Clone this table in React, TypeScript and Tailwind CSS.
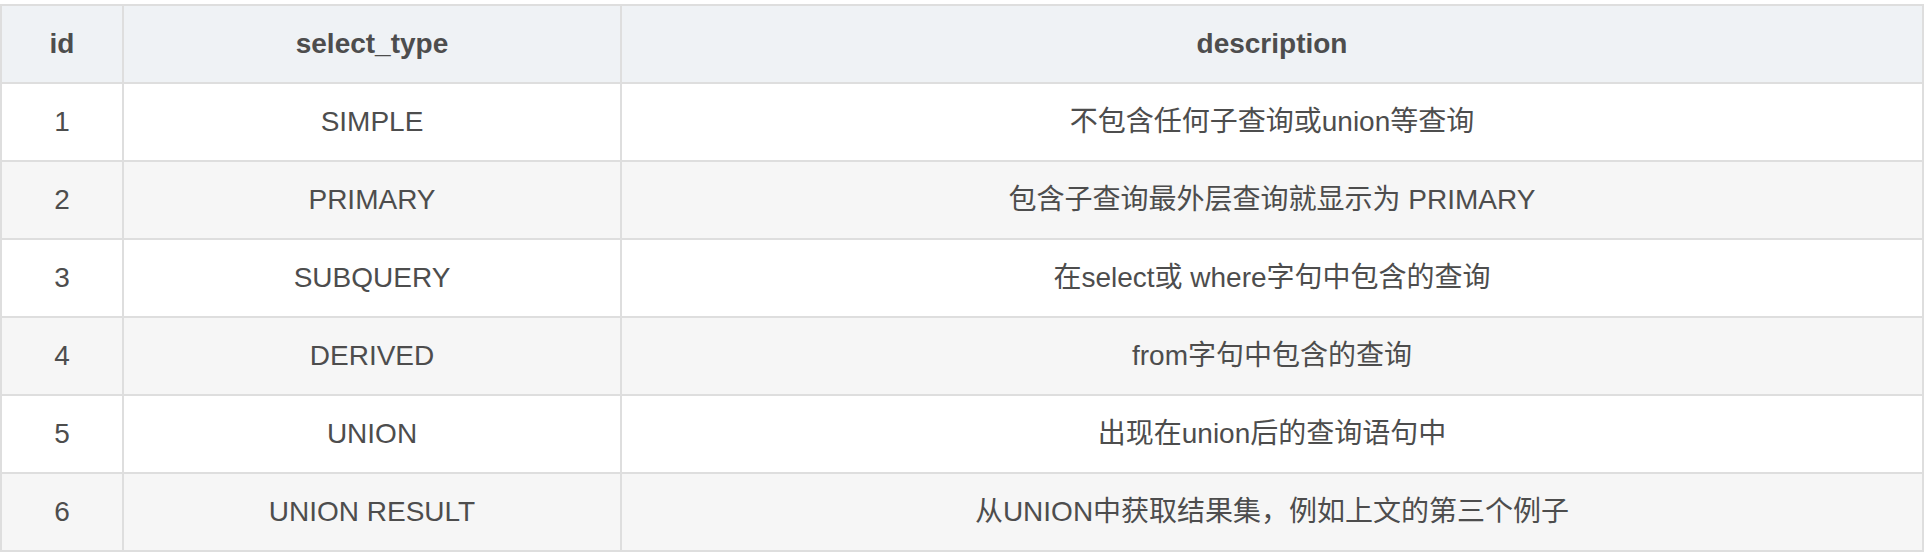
const rows = [
  { id: '1', type: 'SIMPLE', desc: '不包含任何子查询或union等查询' },
  { id: '2', type: 'PRIMARY', desc: '包含子查询最外层查询就显示为 PRIMARY' },
  { id: '3', type: 'SUBQUERY', desc: '在select或 where字句中包含的查询' },
  { id: '4', type: 'DERIVED', desc: 'from字句中包含的查询' },
  { id: '5', type: 'UNION', desc: '出现在union后的查询语句中' },
  { id: '6', type: 'UNION RESULT', desc: '从UNION中获取结果集，例如上文的第三个例子' },
];

const App: React.FC = () => {
  return (
    <div className="bg-white min-h-screen pt-1 font-['Liberation_Sans','Noto_Sans_CJK_SC',sans-serif] text-[28px] text-[#4d4d4d]">
      <div className="w-[1924px] grid grid-cols-[120px_496px_1300px] auto-rows-[76px] gap-[2px] p-[2px] bg-[#dedede]">
        <div className="bg-[#eff2f5] flex items-center justify-center font-bold">id</div>
        <div className="bg-[#eff2f5] flex items-center justify-center font-bold">select_type</div>
        <div className="bg-[#eff2f5] flex items-center justify-center font-bold">description</div>

        {rows.map((row, i) => {
          const bg = i % 2 === 0 ? 'bg-white' : 'bg-[#f6f6f6]';
          return [
            <div key={`${row.id}-id`} className={`${bg} flex items-center justify-center`}>
              {row.id}
            </div>,
            <div key={`${row.id}-type`} className={`${bg} flex items-center justify-center`}>
              {row.type}
            </div>,
            <div key={`${row.id}-desc`} className={`${bg} flex items-center justify-center`}>
              {row.desc}
            </div>,
          ];
        })}
      </div>
    </div>
  );
};

export default App;
